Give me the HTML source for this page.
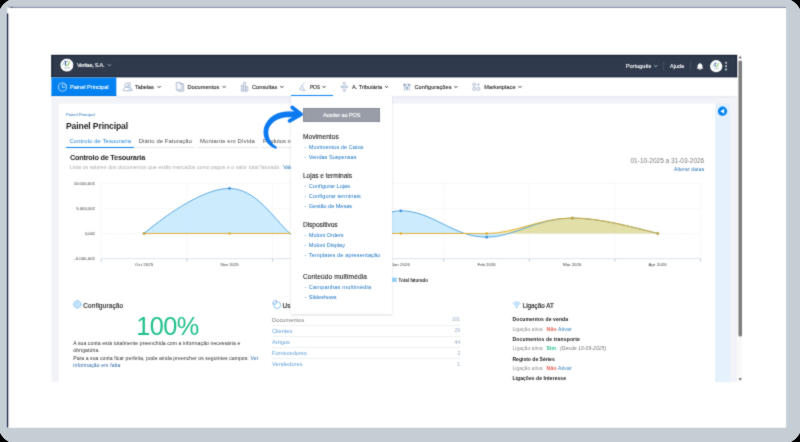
<!DOCTYPE html>
<html lang="pt">
<head>
<meta charset="utf-8">
<title>Moloni - Painel Principal</title>
<style>
html,body{margin:0;padding:0;}
body{width:800px;height:442px;background:#000;position:relative;overflow:hidden;font-family:"Liberation Sans",sans-serif;}
#w{position:absolute;left:0;top:0;width:800px;height:442px;overflow:hidden;will-change:transform;filter:url(#bl);}
.a{position:absolute;}
.t{position:absolute;white-space:nowrap;z-index:2;transform-origin:0 0;}
svg{position:absolute;left:0;top:0;overflow:visible;}
</style>
</head>
<body>
<svg width="0" height="0" style="position:absolute"><defs><filter id="bl" x="0" y="0" width="100%" height="100%" color-interpolation-filters="sRGB"><feConvolveMatrix order="3" kernelMatrix="1 2 1 2 16 2 1 2 1" divisor="28" edgeMode="duplicate" preserveAlpha="true"/></filter></defs></svg>
<div id="w">
<!-- outer frame -->
<svg width="800" height="442" viewBox="0 0 800 442" style="z-index:0">
  <rect x="-2.5" y="-2.5" width="805" height="447" rx="21.5" fill="#c5cdd5"/>
  <!-- paper -->
  <rect x="7.3" y="7.2" width="778.8" height="420.6" fill="#fff"/>
  <path d="M7.6 13.5V427.6" stroke="#0c1a36" stroke-width="1.25" fill="none"/>
  <path d="M11 7.4H786" stroke="#5e6c88" stroke-width="0.8" fill="none"/>
  <path d="M8.5 7.3H13" stroke="#16243f" stroke-width="0.5" fill="none"/>
  <!-- app header -->
  <rect x="51.4" y="54.9" width="685.9" height="22.6" fill="#2f3a4d"/>
  <rect x="51.4" y="54.9" width="685.9" height="1" fill="#0f1a2e"/>
  <rect x="51.4" y="76.2" width="685.9" height="1.3" fill="#1d293d"/>
  <rect x="51.4" y="55" width="1.3" height="22.4" fill="#162136"/>
  <rect x="736" y="55" width="1.3" height="22.4" fill="#162136"/>
  <!-- nav -->
  <rect x="51.4" y="77.5" width="685.9" height="18.7" fill="#fff"/>
  <rect x="51.4" y="77.5" width="64.9" height="19" fill="#0282f0"/>
  <rect x="51.4" y="95" width="64.9" height="1.5" fill="#0274e6"/>
  <!-- page bg -->
  <rect x="51.4" y="96.2" width="685.9" height="285.9" fill="#f2f3f8"/>
  <rect x="116.3" y="96.2" width="621" height="1.6" fill="#e8eaf3"/>
  <rect x="51.4" y="96.5" width="64.9" height="1.3" fill="#fdfaf6"/>
  <!-- main panel -->
  <rect x="58.8" y="103.6" width="656.4" height="278.5" fill="#fff"/>
  <rect x="715.1" y="103.6" width="14.9" height="278.5" fill="#e5f1fd"/>
  <!-- scrollbar track -->
  <rect x="737.3" y="54.9" width="4.7" height="327.2" fill="#f9f9f9"/>
</svg>

<!-- tab underlines -->
<div class="a" style="left:66px;top:146.9px;width:68.2px;height:1.2px;background:#0282f0;"></div>
<div class="a" style="left:136.4px;top:147.2px;width:57.4px;height:0.8px;background:#e4e6ec;"></div>
<div class="a" style="left:197px;top:147.2px;width:60.6px;height:0.8px;background:#e4e6ec;"></div>
<div class="a" style="left:260.6px;top:147.2px;width:66px;height:0.8px;background:#e4e6ec;"></div>

<!-- usage separators -->
<div class="a" style="left:272px;top:324.8px;width:188px;height:0.6px;background:#edeff3;"></div>
<div class="a" style="left:272px;top:335.8px;width:188px;height:0.6px;background:#edeff3;"></div>
<div class="a" style="left:272px;top:346.9px;width:188px;height:0.6px;background:#edeff3;"></div>
<div class="a" style="left:272px;top:358px;width:188px;height:0.6px;background:#edeff3;"></div>

<!-- chart + icons -->
<svg width="800" height="442" viewBox="0 0 800 442" style="z-index:1">
  <!-- grid -->
  <g stroke="#e3e5e8" stroke-width="0.5" stroke-dasharray="1.2 1.2" fill="none">
    <path d="M101.2 183.5H700.5M101.2 208.4H700.5M101.2 233.5H700.5"/>
    <path d="M101.2 183.5V258.5M186.8 183.5V258.5M272.5 183.5V258.5M358.1 183.5V258.5M443.7 183.5V258.5M529.3 183.5V258.5M614.9 183.5V258.5M700.5 183.5V258.5"/>
  </g>
  <path d="M101.2 258.6H700.5" stroke="#d5e1ec" stroke-width="0.9" fill="none"/>
  <path d="M101.2 258.6v3.2M186.8 258.6v3.2M272.5 258.6v3.2M358.1 258.6v3.2M443.7 258.6v3.2M529.3 258.6v3.2M614.9 258.6v3.2M700.5 258.6v3.2" stroke="#a9bccd" stroke-width="0.7" fill="none"/>
  <!-- fills -->
  <path d="M144 233.5 C170.3 211.6 205.1 188.4 229.5 188.4 C256.5 189.2 272.6 217.4 289.8 233.4 C300 243 308 246 315 246 C340 246 372 210.8 400.8 210.8 C432.6 210.8 453.1 237.2 486.7 237.2 C514 237.2 536 218.1 572.3 218.1 C600 218.1 632 227 657.8 233.5 L657.8 233.5 L144 233.5 Z" fill="#99d9fd" fill-opacity="0.5" stroke="none"/>
  <path d="M144 233.5 L486.7 233.5 C515 233.5 540 218 572.3 218 C600 218 632 227 657.8 233.5 L657.8 233.5 L144 233.5 Z" fill="#f4d662" fill-opacity="0.55" stroke="none"/>
  <path d="M144 233.5 C170.3 211.6 205.1 188.4 229.5 188.4 C256.5 189.2 272.6 217.4 289.8 233.4 C300 243 308 246 315 246 C340 246 372 210.8 400.8 210.8 C432.6 210.8 453.1 237.2 486.7 237.2 C514 237.2 536 218.1 572.3 218.1 C600 218.1 632 227 657.8 233.5" fill="none" stroke="#4a9edc" stroke-width="0.9"/>
  <path d="M144 233.5 L486.7 233.5 C515 233.5 540 218 572.3 218 C600 218 632 227 657.8 233.5" fill="none" stroke="#e0aa1c" stroke-width="0.9"/>
  <circle cx="144.0" cy="233.5" r="1.35" fill="#3b8fd8"/><circle cx="229.5" cy="188.4" r="1.35" fill="#3b8fd8"/><circle cx="315.0" cy="246.0" r="1.35" fill="#3b8fd8"/><circle cx="400.8" cy="210.8" r="1.35" fill="#3b8fd8"/><circle cx="486.7" cy="237.2" r="1.35" fill="#3b8fd8"/><circle cx="572.3" cy="218.1" r="1.35" fill="#3b8fd8"/><circle cx="657.8" cy="233.5" r="1.35" fill="#3b8fd8"/><circle cx="144.0" cy="233.5" r="1.2" fill="#e0a818"/><circle cx="229.5" cy="233.5" r="1.2" fill="#e0a818"/><circle cx="315.0" cy="233.5" r="1.2" fill="#e0a818"/><circle cx="400.8" cy="233.5" r="1.2" fill="#e0a818"/><circle cx="486.7" cy="233.5" r="1.2" fill="#e0a818"/><circle cx="572.3" cy="218.0" r="1.2" fill="#e0a818"/><circle cx="657.8" cy="233.5" r="1.2" fill="#e0a818"/>
  <!-- legend -->
  <rect x="392.2" y="277.6" width="4.5" height="4.3" fill="#8fd0f9"/>

  <!-- scrollbar thumb + arrows -->
  <rect x="738.5" y="60.6" width="3.5" height="276" rx="1.6" fill="#7c7c7c"/>
  <path d="M738.7 58.2L740.2 56L741.7 58.2Z" fill="#555"/>
  <path d="M738.6 378.3L740.2 380.6L741.8 378.3Z" fill="#555"/>
  <!-- collapse button -->
  <circle cx="722.5" cy="111.2" r="4.6" fill="#0282f0"/>
  <path d="M724.2 108.7V113.7L720.4 111.2Z" fill="#fff"/>
</svg>


<svg width="800" height="442" viewBox="0 0 800 442" style="z-index:2">
  <!-- header avatar left -->
  <circle cx="66.85" cy="65.1" r="7.0" fill="#fff" stroke="#1b2435" stroke-width="0.9"/>
  <g transform="translate(66.85 65.1) scale(1.00)"><path d="M-2.8 -4.2H1V-3.55H-2.8Z" fill="#234f9a"/><path d="M-1.35 -3.4L-1.5 0.5" stroke="#1f3f7a" stroke-width="0.95" fill="none"/><path d="M-2.7 -3L-4.3 0.3" stroke="#86b6e2" stroke-width="0.8" fill="none"/><path d="M2.95 -3.8L0.8 0.5L-0.6 0.1" stroke="#5cb531" stroke-width="0.95" fill="none" stroke-linejoin="round"/><rect x="-2.75" y="2.3" width="5.7" height="1" fill="#9aa8bd" opacity="0.75"/></g>
  <path d="M108.15 64.65L109.40 65.95L110.65 64.65" stroke="#e8ebf0" stroke-width="0.70" fill="none" stroke-linecap="round" stroke-linejoin="round"/>
  <!-- header right -->
  <path d="M654.55 65.55L655.80 66.85L657.05 65.55" stroke="#e8ebf0" stroke-width="0.70" fill="none" stroke-linecap="round" stroke-linejoin="round"/>
  <path d="M663.4 62V70.6M690.6 62V70.6" stroke="#566176" stroke-width="0.6"/>
  <g transform="translate(700 66.4) scale(0.86) translate(-700 -66.4)"><path d="M700 62.5c-0.5 0-0.8 0.3-0.8 0.7c-1.3 0.4-2 1.5-2 2.9v1.7l-0.8 1v0.4h7.2v-0.4l-0.8-1v-1.7c0-1.4-0.7-2.5-2-2.9c0-0.4-0.3-0.7-0.8-0.7zM699 69.7a1 1 0 0 0 2 0z" fill="#fff"/></g>
  <circle cx="716.2" cy="66.2" r="6.1" fill="#fff"/>
  <g transform="translate(716.30 66.40) scale(0.85)"><path d="M-2.8 -4.2H1V-3.55H-2.8Z" fill="#234f9a"/><path d="M-1.35 -3.4L-1.5 0.5" stroke="#1f3f7a" stroke-width="0.95" fill="none"/><path d="M-2.7 -3L-4.3 0.3" stroke="#86b6e2" stroke-width="0.8" fill="none"/><path d="M2.95 -3.8L0.8 0.5L-0.6 0.1" stroke="#5cb531" stroke-width="0.95" fill="none" stroke-linejoin="round"/><rect x="-2.75" y="2.3" width="5.7" height="1" fill="#9aa8bd" opacity="0.75"/></g>
  <circle cx="726" cy="62.8" r="0.9" fill="#fff"/><circle cx="726" cy="66.1" r="0.9" fill="#fff"/><circle cx="726" cy="69.4" r="0.9" fill="#fff"/>
  <!-- nav: clock -->
  <circle cx="62.5" cy="87" r="4.1" fill="none" stroke="#fff" stroke-width="0.65"/>
  <path d="M62.3 84.3V87.4H65.2" fill="none" stroke="#fff" stroke-width="0.65"/>
  <path d="M63.3 83.9A3.3 3.3 0 0 1 65.6 86.3" fill="none" stroke="#fff" stroke-width="0.5"/>
  <!-- nav: tabelas (users) -->
  <g fill="#edf1f8" stroke="#8b9cbb" stroke-width="0.6" stroke-linejoin="round">
    <circle cx="128.9" cy="84.3" r="1.7"/>
    <path d="M125.6 90.6c0-2.4 1.3-3.6 3.3-3.6s3.2 1.2 3.2 3.6z"/>
    <circle cx="126.4" cy="84.9" r="1.8" fill="#fff"/>
    <path d="M123 90.7c0-2.3 1.3-3.5 3.4-3.5s3.5 1.2 3.5 3.5z" fill="#fff"/>
  </g>
  <path d="M157.95 86.35L159.20 87.65L160.45 86.35" stroke="#262626" stroke-width="0.9" fill="none" stroke-linecap="round" stroke-linejoin="round"/>
  <!-- nav: documentos -->
  <g fill="#edf1f8" stroke="#8b9cbb" stroke-width="0.6" stroke-linejoin="round">
    <path d="M178 83.8H183.7V91.2H178Z"/>
    <path d="M176.3 82.4H180.2L181.9 84.1V89.9H176.3Z" fill="#f4f6fb"/>
    <path d="M180.2 82.4V84.1H181.9" fill="none"/>
  </g>
  <path d="M222.85 86.35L224.10 87.65L225.35 86.35" stroke="#262626" stroke-width="0.9" fill="none" stroke-linecap="round" stroke-linejoin="round"/>
  <!-- nav: consultas (bars) -->
  <g fill="#edf1f8" stroke="#8b9cbb" stroke-width="0.55" stroke-linejoin="round">
    <rect x="241.3" y="85.4" width="1.9" height="5.8"/>
    <rect x="243.6" y="82.3" width="1.9" height="8.9"/>
    <rect x="245.9" y="86.6" width="1.9" height="4.6"/>
  </g>
  <path d="M280.55 86.35L281.80 87.65L283.05 86.35" stroke="#262626" stroke-width="0.9" fill="none" stroke-linecap="round" stroke-linejoin="round"/>
  <!-- nav: pos -->
  <g fill="none" stroke="#93a3bd" stroke-width="0.6" stroke-linecap="round">
    <path d="M304.4 82.7L299.4 89.2H302.2"/>
    <path d="M302 86L304.4 89.8"/>
    <path d="M301.6 90.6H305.4"/>
  </g>
  <path d="M322.75 86.35L324.00 87.65L325.25 86.35" stroke="#262626" stroke-width="0.9" fill="none" stroke-linecap="round" stroke-linejoin="round"/>
  <!-- nav: tributaria -->
  <g fill="#edf1f8" stroke="#8b9cbb" stroke-width="0.55">
    <circle cx="344.4" cy="83.4" r="1.2"/><circle cx="344.4" cy="90.3" r="1.2"/>
    <circle cx="342.1" cy="86.8" r="1.1"/><circle cx="346.7" cy="86.8" r="1.1"/>
    <circle cx="344.4" cy="86.8" r="1.0"/>
  </g>
  <path d="M385.35 86.35L386.60 87.65L387.85 86.35" stroke="#262626" stroke-width="0.9" fill="none" stroke-linecap="round" stroke-linejoin="round"/>
  <!-- nav: configuracoes (sliders) -->
  <g fill="none" stroke="#8b9cbb" stroke-width="0.6">
    <path d="M404.6 83.3V90.9M406.9 83.3V90.9M409.2 83.3V90.9"/>
    <rect x="403.8" y="84.3" width="1.6" height="1.5" fill="#edf1f8"/><rect x="406.1" y="87.6" width="1.6" height="1.5" fill="#edf1f8"/><rect x="408.4" y="84.3" width="1.6" height="1.5" fill="#edf1f8"/>
  </g>
  <path d="M454.65 86.35L455.90 87.65L457.15 86.35" stroke="#262626" stroke-width="0.9" fill="none" stroke-linecap="round" stroke-linejoin="round"/>
  <!-- nav: marketplace -->
  <g fill="#edf1f8" stroke="#8b9cbb" stroke-width="0.55">
    <rect x="472.8" y="83.2" width="2.8" height="2.8" rx="0.5"/>
    <rect x="472.8" y="87.5" width="2.8" height="2.8" rx="0.5"/>
    <rect x="477" y="87.5" width="2.8" height="2.8" rx="0.5"/>
    <path d="M478.4 83.2V86M477 84.6H479.8" fill="none"/>
  </g>
  <path d="M518.75 86.35L520.00 87.65L521.25 86.35" stroke="#262626" stroke-width="0.9" fill="none" stroke-linecap="round" stroke-linejoin="round"/>
  <!-- config gear -->
  <g fill="none" stroke="#9bcdf5">
    <circle cx="77.4" cy="304.3" r="3.3" stroke-width="1.1" fill="#eaf5fd"/>
    <path d="M77.4 299.8V301M77.4 307.6V308.8M72.9 304.3H74.1M80.7 304.3H81.9" stroke-width="1.3"/>
    <rect x="76.1" y="303" width="2.6" height="2.6" stroke-width="0.6" stroke="#6fb6ef" fill="#fff"/>
  </g>
  <!-- usage icon -->
  <g fill="none" stroke="#5fa9ea" stroke-width="0.7">
    <circle cx="277.2" cy="305.1" r="3.4"/>
    <path d="M276.2 300.4A3.6 3.6 0 0 0 272.6 304H276.2Z" fill="#fff"/>
  </g>
  <!-- wifi icon -->
  <g fill="none" stroke="#8cc6f4" stroke-linecap="round">
    <path d="M513.2 303.4A5 5 0 0 1 520.2 303.4" stroke-width="0.9"/>
    <path d="M514.3 304.7A3.4 3.4 0 0 1 519.1 304.7" stroke-width="0.9"/>
    <path d="M515.4 306A1.9 1.9 0 0 1 518 306" stroke-width="0.9"/>
    <circle cx="516.7" cy="307.4" r="0.6" fill="#3d96e6" stroke="none"/>
  </g>
  <path d="M513 302.6L516.7 307.6L520.4 302.6A5.4 5.4 0 0 0 513 302.6Z" fill="#bfe0f9" opacity="0.45"/>
</svg>

<div class="t" style="left:76px;top:62px;font-size:5.60px;line-height:6px;color:#ffffff;transform:translate(0.90px,0.00px) rotate(0.001deg);letter-spacing:-0.252px;-webkit-text-stroke:0.12px #ffffff;">Veritas, S.A.</div>
<div class="t" style="left:626px;top:63px;font-size:5.40px;line-height:6px;color:#ffffff;transform:translate(0.00px,0.00px) rotate(0.001deg);letter-spacing:0.080px;-webkit-text-stroke:0.12px #ffffff;">Português</div>
<div class="t" style="left:670px;top:63px;font-size:5.40px;line-height:6px;color:#ffffff;transform:translate(0.00px,0.00px) rotate(0.001deg);letter-spacing:0.041px;-webkit-text-stroke:0.12px #ffffff;">Ajuda</div>
<div class="t" style="left:70px;top:84px;font-size:5.60px;line-height:6px;color:#ffffff;transform:translate(0.00px,0.00px) rotate(0.001deg);-webkit-text-stroke:0.12px #ffffff;">Painel Principal</div>
<div class="t" style="left:135px;top:84px;font-size:5.60px;line-height:6px;color:#2b2b2b;transform:translate(0.00px,0.00px) rotate(0.001deg);letter-spacing:-0.097px;-webkit-text-stroke:0.12px #2b2b2b;">Tabelas</div>
<div class="t" style="left:187px;top:84px;font-size:5.60px;line-height:6px;color:#2b2b2b;transform:translate(0.50px,0.00px) rotate(0.001deg);letter-spacing:0.039px;-webkit-text-stroke:0.12px #2b2b2b;">Documentos</div>
<div class="t" style="left:252px;top:84px;font-size:5.60px;line-height:6px;color:#2b2b2b;transform:translate(0.00px,0.00px) rotate(0.001deg);letter-spacing:0.058px;-webkit-text-stroke:0.12px #2b2b2b;">Consultas</div>
<div class="t" style="left:310px;top:83px;font-size:5.00px;line-height:6px;color:#2b2b2b;transform:translate(0.00px,0.50px) rotate(0.001deg);letter-spacing:-0.254px;-webkit-text-stroke:0.12px #2b2b2b;">POS</div>
<div class="t" style="left:352px;top:84px;font-size:5.60px;line-height:6px;color:#2b2b2b;transform:translate(0.00px,0.00px) rotate(0.001deg);letter-spacing:-0.012px;-webkit-text-stroke:0.12px #2b2b2b;">A. Tributária</div>
<div class="t" style="left:414px;top:84px;font-size:5.60px;line-height:6px;color:#2b2b2b;transform:translate(0.50px,0.00px) rotate(0.001deg);letter-spacing:0.079px;-webkit-text-stroke:0.12px #2b2b2b;">Configurações</div>
<div class="t" style="left:484px;top:84px;font-size:5.60px;line-height:6px;color:#2b2b2b;transform:translate(0.20px,0.00px) rotate(0.001deg);letter-spacing:0.085px;-webkit-text-stroke:0.12px #2b2b2b;">Marketplace</div>
<div class="t" style="left:66px;top:112px;font-size:4.40px;line-height:5px;color:#2a76bd;transform:translate(0.00px,0.00px) rotate(0.001deg);letter-spacing:-0.110px;">Painel Principal</div>
<div class="t" style="left:66px;top:120px;font-size:8.60px;line-height:10px;color:#1d1d1d;transform:translate(0.00px,0.50px) rotate(0.001deg);font-weight:700;letter-spacing:-0.125px;">Painel Principal</div>
<div class="t" style="left:69px;top:137px;font-size:5.80px;line-height:6px;color:#1c7fd0;transform:translate(0.50px,0.50px) rotate(0.001deg);letter-spacing:0.134px;">Controlo de Tesouraria</div>
<div class="t" style="left:138px;top:137px;font-size:5.80px;line-height:6px;color:#4a4a4a;transform:translate(0.80px,0.50px) rotate(0.001deg);letter-spacing:0.120px;">Diário de Faturação</div>
<div class="t" style="left:200px;top:137px;font-size:5.80px;line-height:6px;color:#4a4a4a;transform:translate(0.00px,0.50px) rotate(0.001deg);letter-spacing:0.174px;">Montante em Dívida</div>
<div class="t" style="left:263px;top:137px;font-size:5.80px;line-height:6px;color:#4a4a4a;transform:translate(0.00px,0.50px) rotate(0.001deg);letter-spacing:-0.040px;">Produtos mais vendidos</div>
<div class="t" style="left:70px;top:153px;font-size:7.30px;line-height:9px;color:#222;transform:translate(0.00px,0.00px) rotate(0.001deg);font-weight:700;letter-spacing:-0.216px;">Controlo de Tesouraria</div>
<div class="t" style="left:70px;top:163px;font-size:5.00px;line-height:6px;color:#a9a9a9;transform:translate(0.00px,0.50px) rotate(0.001deg);letter-spacing:0.119px;">Lista os valores dos documentos que estão marcados como pagos e o valor total faturado.</div>
<div class="t" style="left:283px;top:163px;font-size:5.00px;line-height:6px;color:#2a76bd;transform:translate(0.20px,0.50px) rotate(0.001deg);letter-spacing:0.020px;">Valores sem IVA</div>
<div class="t" style="left:630px;top:156px;font-size:6.50px;line-height:7px;color:#7a7a7a;transform:translate(0.50px,0.50px) rotate(0.001deg);">01-10-2025 a 31-03-2026</div>
<div class="t" style="left:674px;top:167px;font-size:4.90px;line-height:5px;color:#1f6db3;transform:translate(0.00px,0.00px) rotate(0.001deg);letter-spacing:0.197px;">Alterar datas</div>
<div class="t" style="left:73px;top:181px;font-size:4.40px;line-height:5px;color:#3c3c3c;transform:translate(0.70px,0.00px) rotate(0.001deg);letter-spacing:-0.068px;">10.000,00€</div>
<div class="t" style="left:76px;top:205px;font-size:4.40px;line-height:5px;color:#3c3c3c;transform:translate(0.20px,0.50px) rotate(0.001deg);letter-spacing:-0.083px;">5.000,00€</div>
<div class="t" style="left:85px;top:231px;font-size:4.40px;line-height:5px;color:#3c3c3c;transform:translate(0.00px,0.00px) rotate(0.001deg);letter-spacing:-0.200px;">0,00€</div>
<div class="t" style="left:74px;top:256px;font-size:4.40px;line-height:5px;color:#3c3c3c;transform:translate(0.20px,0.00px) rotate(0.001deg);letter-spacing:-0.020px;">-5.000,00€</div>
<div class="t" style="left:135px;top:262px;font-size:4.40px;line-height:5px;color:#3c3c3c;transform:translate(0.00px,0.00px) rotate(0.001deg);letter-spacing:0.046px;">Oct 2025</div>
<div class="t" style="left:220px;top:262px;font-size:4.40px;line-height:5px;color:#3c3c3c;transform:translate(0.50px,0.00px) rotate(0.001deg);letter-spacing:-0.075px;">Nov 2025</div>
<div class="t" style="left:306px;top:262px;font-size:4.40px;line-height:5px;color:#3c3c3c;transform:translate(0.00px,0.00px) rotate(0.001deg);letter-spacing:-0.075px;">Dec 2025</div>
<div class="t" style="left:391px;top:262px;font-size:4.40px;line-height:5px;color:#3c3c3c;transform:translate(0.70px,0.00px) rotate(0.001deg);letter-spacing:0.015px;">Jan 2026</div>
<div class="t" style="left:477px;top:262px;font-size:4.40px;line-height:5px;color:#3c3c3c;transform:translate(0.50px,0.00px) rotate(0.001deg);letter-spacing:-0.045px;">Feb 2026</div>
<div class="t" style="left:563px;top:262px;font-size:4.40px;line-height:5px;color:#3c3c3c;transform:translate(0.10px,0.00px) rotate(0.001deg);letter-spacing:-0.045px;">Mar 2026</div>
<div class="t" style="left:648px;top:262px;font-size:4.40px;line-height:5px;color:#3c3c3c;transform:translate(0.60px,0.00px) rotate(0.001deg);letter-spacing:0.046px;">Apr 2026</div>
<div class="t" style="left:398px;top:277px;font-size:4.50px;line-height:5px;color:#333;transform:translate(0.60px,0.50px) rotate(0.001deg);font-weight:700;letter-spacing:-0.019px;">Total faturado</div>
<div class="t" style="left:83px;top:301px;font-size:6.30px;line-height:7px;color:#222;transform:translate(0.30px,0.50px) rotate(0.001deg);letter-spacing:0.211px;-webkit-text-stroke:0.16px #222;">Configuração</div>
<div class="t" style="left:136px;top:311px;font-size:25.30px;line-height:28px;color:#1cbf8a;transform:translate(0.20px,0.50px) rotate(0.001deg);letter-spacing:-0.526px;">100%</div>
<div class="t" style="left:73px;top:339px;font-size:5.10px;line-height:6px;color:#2c2c2c;transform:translate(0.20px,0.50px) rotate(0.001deg);letter-spacing:0.080px;">A sua conta está totalmente preenchida com a informação necessária e</div>
<div class="t" style="left:73px;top:347px;font-size:5.10px;line-height:6px;color:#2c2c2c;transform:translate(0.20px,0.00px) rotate(0.001deg);letter-spacing:0.110px;">obrigatória.</div>
<div class="t" style="left:73px;top:354px;font-size:5.10px;line-height:6px;color:#2c2c2c;transform:translate(0.20px,0.50px) rotate(0.001deg);letter-spacing:0.062px;">Para a sua conta ficar perfeita, pode ainda preencher os seguintes campos:</div>
<div class="t" style="left:250px;top:354px;font-size:5.10px;line-height:6px;color:#1f5f9f;transform:translate(0.50px,0.50px) rotate(0.001deg);letter-spacing:0.181px;">Ver</div>
<div class="t" style="left:73px;top:361px;font-size:5.10px;line-height:6px;color:#1f5f9f;transform:translate(0.20px,0.50px) rotate(0.001deg);letter-spacing:0.135px;">informação em falta</div>
<div class="t" style="left:282px;top:301px;font-size:6.30px;line-height:7px;color:#222;transform:translate(0.60px,0.50px) rotate(0.001deg);letter-spacing:0.191px;-webkit-text-stroke:0.16px #222;">Uso da conta</div>
<div class="t" style="left:272px;top:316px;font-size:5.70px;line-height:6px;color:#777;transform:translate(0.00px,0.50px) rotate(0.001deg);letter-spacing:0.056px;">Documentos</div>
<div class="t" style="left:272px;top:327px;font-size:5.70px;line-height:6px;color:#5f9fd8;transform:translate(0.00px,0.50px) rotate(0.001deg);letter-spacing:-0.033px;">Clientes</div>
<div class="t" style="left:272px;top:338px;font-size:5.70px;line-height:6px;color:#5f9fd8;transform:translate(0.00px,0.50px) rotate(0.001deg);letter-spacing:0.042px;">Artigos</div>
<div class="t" style="left:272px;top:349px;font-size:5.70px;line-height:6px;color:#5f9fd8;transform:translate(0.00px,0.50px) rotate(0.001deg);letter-spacing:-0.024px;">Fornecedores</div>
<div class="t" style="left:272px;top:360px;font-size:5.70px;line-height:6px;color:#5f9fd8;transform:translate(0.00px,0.50px) rotate(0.001deg);letter-spacing:0.014px;">Vendedores</div>
<div class="t" style="left:451px;top:316px;font-size:5.40px;line-height:6px;color:#9fb0c0;transform:translate(0.80px,0.00px) rotate(0.001deg);letter-spacing:-0.267px;">101</div>
<div class="t" style="left:454px;top:327px;font-size:5.40px;line-height:6px;color:#9fb0c0;transform:translate(0.50px,0.00px) rotate(0.001deg);letter-spacing:-0.250px;">29</div>
<div class="t" style="left:454px;top:338px;font-size:5.40px;line-height:6px;color:#9fb0c0;transform:translate(0.50px,0.50px) rotate(0.001deg);letter-spacing:-0.250px;">44</div>
<div class="t" style="left:457px;top:349px;font-size:5.40px;line-height:6px;color:#9fb0c0;transform:translate(0.30px,0.50px) rotate(0.001deg);letter-spacing:-0.300px;">3</div>
<div class="t" style="left:457px;top:360px;font-size:5.40px;line-height:6px;color:#9fb0c0;transform:translate(0.30px,0.50px) rotate(0.001deg);letter-spacing:-0.300px;">1</div>
<div class="t" style="left:522px;top:301px;font-size:6.30px;line-height:7px;color:#222;transform:translate(0.70px,0.50px) rotate(0.001deg);letter-spacing:0.005px;-webkit-text-stroke:0.16px #222;">Ligação AT</div>
<div class="t" style="left:512px;top:316px;font-size:5.00px;line-height:6px;color:#151515;transform:translate(0.50px,0.00px) rotate(0.001deg);font-weight:700;letter-spacing:0.123px;">Documentos de venda</div>
<div class="t" style="left:512px;top:325px;font-size:5.00px;line-height:6px;color:#8f8f8f;transform:translate(0.50px,0.50px) rotate(0.001deg);letter-spacing:0.024px;">Ligação ativa:</div>
<div class="t" style="left:546px;top:325px;font-size:5.00px;line-height:6px;color:#e8584a;transform:translate(0.60px,0.50px) rotate(0.001deg);font-weight:700;letter-spacing:0.216px;">Não</div>
<div class="t" style="left:558px;top:325px;font-size:5.00px;line-height:6px;color:#2a7ab8;transform:translate(0.00px,0.50px) rotate(0.001deg);letter-spacing:0.153px;">Ativar</div>
<div class="t" style="left:512px;top:336px;font-size:5.00px;line-height:6px;color:#151515;transform:translate(0.50px,0.00px) rotate(0.001deg);font-weight:700;letter-spacing:0.161px;">Documentos de transporte</div>
<div class="t" style="left:512px;top:345px;font-size:5.00px;line-height:6px;color:#8f8f8f;transform:translate(0.50px,0.00px) rotate(0.001deg);letter-spacing:0.024px;">Ligação ativa:</div>
<div class="t" style="left:546px;top:345px;font-size:5.00px;line-height:6px;color:#1cbf8a;transform:translate(0.60px,0.00px) rotate(0.001deg);font-weight:700;letter-spacing:0.143px;">Sim</div>
<div class="t" style="left:560px;top:345px;font-size:5.00px;line-height:6px;color:#777;transform:translate(0.00px,0.00px) rotate(0.001deg);font-style:italic;letter-spacing:0.081px;">(Desde 10-09-2025)</div>
<div class="t" style="left:512px;top:355px;font-size:5.00px;line-height:6px;color:#151515;transform:translate(0.50px,0.50px) rotate(0.001deg);font-weight:700;letter-spacing:0.014px;">Registo de Séries</div>
<div class="t" style="left:512px;top:364px;font-size:5.00px;line-height:6px;color:#8f8f8f;transform:translate(0.50px,0.50px) rotate(0.001deg);letter-spacing:0.024px;">Ligação ativa:</div>
<div class="t" style="left:546px;top:364px;font-size:5.00px;line-height:6px;color:#e8584a;transform:translate(0.60px,0.50px) rotate(0.001deg);font-weight:700;letter-spacing:0.216px;">Não</div>
<div class="t" style="left:558px;top:364px;font-size:5.00px;line-height:6px;color:#2a7ab8;transform:translate(0.00px,0.50px) rotate(0.001deg);letter-spacing:0.153px;">Ativar</div>
<div class="t" style="left:512px;top:375px;font-size:5.00px;line-height:6px;color:#151515;transform:translate(0.50px,0.00px) rotate(0.001deg);font-weight:700;letter-spacing:0.060px;">Ligações de Interesse</div>
<div class="t" style="left:323px;top:112px;font-size:5.60px;line-height:6px;color:#ffffff;transform:translate(0.00px,0.00px) rotate(0.001deg);letter-spacing:-0.106px;z-index:5;-webkit-text-stroke:0.12px #ffffff;">Aceder ao POS</div>
<div class="t" style="left:303px;top:133px;font-size:6.60px;line-height:7px;color:#1f1f1f;transform:translate(0.00px,0.00px) rotate(0.001deg);letter-spacing:0.015px;z-index:5;-webkit-text-stroke:0.10px #1f1f1f;">Movimentos</div>
<div class="t" style="left:303px;top:171px;font-size:6.60px;line-height:7px;color:#1f1f1f;transform:translate(0.00px,0.50px) rotate(0.001deg);letter-spacing:-0.050px;z-index:5;-webkit-text-stroke:0.10px #1f1f1f;">Lojas e terminais</div>
<div class="t" style="left:303px;top:220px;font-size:6.60px;line-height:7px;color:#1f1f1f;transform:translate(0.00px,0.50px) rotate(0.001deg);letter-spacing:-0.057px;z-index:5;-webkit-text-stroke:0.10px #1f1f1f;">Dispositivos</div>
<div class="t" style="left:303px;top:272px;font-size:6.60px;line-height:7px;color:#1f1f1f;transform:translate(0.00px,0.50px) rotate(0.001deg);letter-spacing:0.089px;z-index:5;-webkit-text-stroke:0.10px #1f1f1f;">Conteúdo multimédia</div>
<div class="t" style="left:304px;top:144px;font-size:5.60px;line-height:6px;color:#1872c2;transform:translate(0.60px,0.00px) rotate(0.001deg);letter-spacing:0.025px;z-index:5;">-</div>
<div class="t" style="left:308px;top:144px;font-size:5.60px;line-height:6px;color:#1872c2;transform:translate(0.80px,0.00px) rotate(0.001deg);letter-spacing:0.032px;z-index:5;">Movimentos de Caixa</div>
<div class="t" style="left:304px;top:154px;font-size:5.60px;line-height:6px;color:#1872c2;transform:translate(0.60px,0.00px) rotate(0.001deg);letter-spacing:0.025px;z-index:5;">-</div>
<div class="t" style="left:308px;top:154px;font-size:5.60px;line-height:6px;color:#1872c2;transform:translate(0.80px,0.00px) rotate(0.001deg);letter-spacing:-0.013px;z-index:5;">Vendas Suspensas</div>
<div class="t" style="left:304px;top:183px;font-size:5.60px;line-height:6px;color:#1872c2;transform:translate(0.60px,0.00px) rotate(0.001deg);letter-spacing:0.025px;z-index:5;">-</div>
<div class="t" style="left:308px;top:183px;font-size:5.60px;line-height:6px;color:#1872c2;transform:translate(0.80px,0.00px) rotate(0.001deg);letter-spacing:0.010px;z-index:5;">Configurar Lojas</div>
<div class="t" style="left:304px;top:193px;font-size:5.60px;line-height:6px;color:#1872c2;transform:translate(0.60px,0.00px) rotate(0.001deg);letter-spacing:0.025px;z-index:5;">-</div>
<div class="t" style="left:308px;top:193px;font-size:5.60px;line-height:6px;color:#1872c2;transform:translate(0.80px,0.00px) rotate(0.001deg);letter-spacing:0.091px;z-index:5;">Configurar terminais</div>
<div class="t" style="left:304px;top:203px;font-size:5.60px;line-height:6px;color:#1872c2;transform:translate(0.60px,0.00px) rotate(0.001deg);letter-spacing:0.025px;z-index:5;">-</div>
<div class="t" style="left:308px;top:203px;font-size:5.60px;line-height:6px;color:#1872c2;transform:translate(0.80px,0.00px) rotate(0.001deg);letter-spacing:-0.043px;z-index:5;">Gestão de Mesas</div>
<div class="t" style="left:304px;top:232px;font-size:5.60px;line-height:6px;color:#1872c2;transform:translate(0.60px,0.00px) rotate(0.001deg);letter-spacing:0.025px;z-index:5;">-</div>
<div class="t" style="left:308px;top:232px;font-size:5.60px;line-height:6px;color:#1872c2;transform:translate(0.80px,0.00px) rotate(0.001deg);letter-spacing:-0.034px;z-index:5;">Moloni Orders</div>
<div class="t" style="left:304px;top:242px;font-size:5.60px;line-height:6px;color:#1872c2;transform:translate(0.60px,0.00px) rotate(0.001deg);letter-spacing:0.025px;z-index:5;">-</div>
<div class="t" style="left:308px;top:242px;font-size:5.60px;line-height:6px;color:#1872c2;transform:translate(0.80px,0.00px) rotate(0.001deg);letter-spacing:-0.013px;z-index:5;">Moloni Display</div>
<div class="t" style="left:304px;top:252px;font-size:5.60px;line-height:6px;color:#1872c2;transform:translate(0.60px,0.00px) rotate(0.001deg);letter-spacing:0.025px;z-index:5;">-</div>
<div class="t" style="left:308px;top:252px;font-size:5.60px;line-height:6px;color:#1872c2;transform:translate(0.80px,0.00px) rotate(0.001deg);letter-spacing:0.119px;z-index:5;">Templates de apresentação</div>
<div class="t" style="left:304px;top:284px;font-size:5.60px;line-height:6px;color:#1872c2;transform:translate(0.60px,0.00px) rotate(0.001deg);letter-spacing:0.025px;z-index:5;">-</div>
<div class="t" style="left:308px;top:284px;font-size:5.60px;line-height:6px;color:#1872c2;transform:translate(0.80px,0.00px) rotate(0.001deg);letter-spacing:0.182px;z-index:5;">Campanhas multimédia</div>
<div class="t" style="left:304px;top:294px;font-size:5.60px;line-height:6px;color:#1872c2;transform:translate(0.60px,0.00px) rotate(0.001deg);letter-spacing:0.025px;z-index:5;">-</div>
<div class="t" style="left:308px;top:294px;font-size:5.60px;line-height:6px;color:#1872c2;transform:translate(0.80px,0.00px) rotate(0.001deg);letter-spacing:-0.060px;z-index:5;">Slideshows</div>

<!-- POS active underline + dropdown -->
<div class="a" style="left:291.2px;top:94.9px;width:41.8px;height:1.5px;background:#0282f0;z-index:4;"></div>
<div class="a" style="left:291.2px;top:96.4px;width:100.8px;height:217.4px;background:#fff;z-index:3;box-shadow:0 0.8px 2.5px rgba(40,50,70,0.16);"></div>
<div class="a" style="left:303.3px;top:108.1px;width:76.7px;height:13.7px;background:#999da8;box-sizing:border-box;border:0.6px solid #868c99;z-index:4;"></div>

<!-- arrow -->
<svg width="800" height="442" viewBox="0 0 800 442" style="z-index:6">
  <path d="M275.6 148.7 C268 146 263.2 139 263.5 131.5 C264 121 273 112.4 286 111.4 L299.5 111.2 L299.5 117.2 L286.5 117.2 C277 117.8 268.6 124 268.3 131.5 C268.1 137.8 271 143.2 276.3 146.6 C277.2 147.6 276.6 148.9 275.6 148.7Z" fill="#0b79f0"/>
  <path d="M292.3 107.5L301 114.3L289.6 120.8" fill="none" stroke="#0b79f0" stroke-width="3.8" stroke-linecap="round" stroke-linejoin="round"/>
</svg>
</div>
</body>
</html>
